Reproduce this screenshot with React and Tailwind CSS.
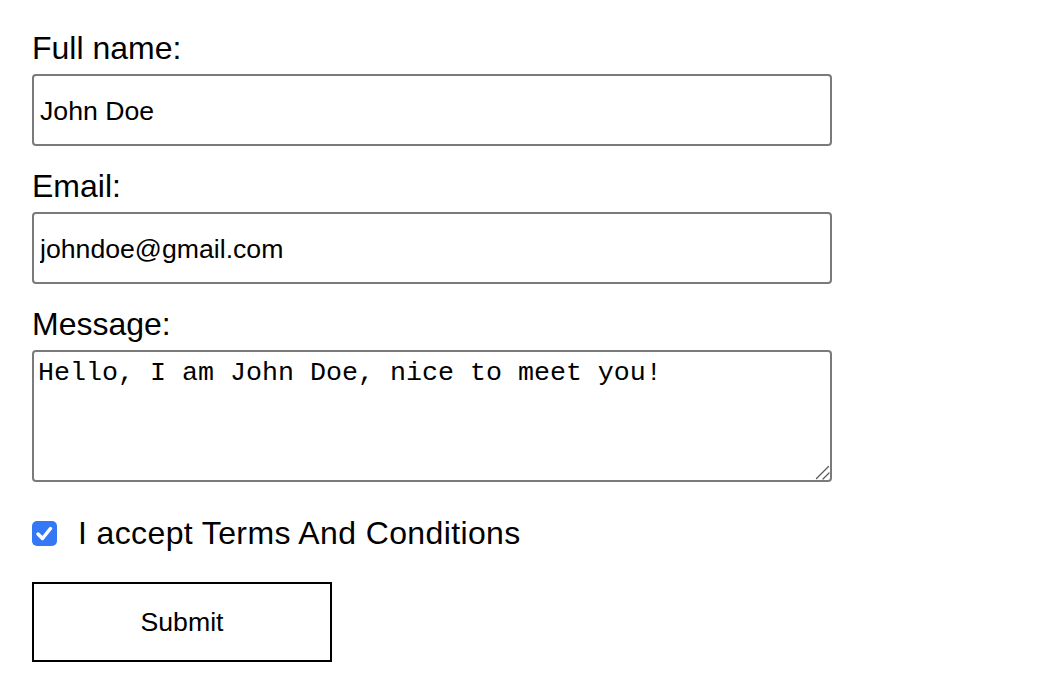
import React, { useState } from 'react';

const labelCls = "block text-[32px] leading-[36px] text-black mb-2";
const fieldCls = "block w-[800px] border-2 border-[#7a7a7a] rounded-[4px] bg-white text-black outline-none";

export default function App() {
    const [form, setForm] = useState({
        name: 'John Doe',
        email: 'johndoe@gmail.com',
        message: 'Hello, I am John Doe, nice to meet you!',
        accept: true,
    });

    const update = (key, value) => setForm(prev => ({ ...prev, [key]: value }));

    return (
        <div className="min-h-screen bg-white pl-8 pt-[30px] font-['Liberation_Sans',Arial,sans-serif]">
            <form className="flex flex-col items-start" onSubmit={(e) => e.preventDefault()}>
                <label className={labelCls}>Full name:</label>
                <input
                    type="text"
                    className={`${fieldCls} h-[72px] px-[6px] pt-[2px] text-[26.67px]`}
                    value={form.name}
                    onChange={(e) => update('name', e.target.value)}
                />

                <label className={`${labelCls} mt-[22px]`}>Email:</label>
                <input
                    type="email"
                    className={`${fieldCls} h-[72px] px-[6px] pt-[2px] text-[26.67px]`}
                    value={form.email}
                    onChange={(e) => update('email', e.target.value)}
                />

                <label className={`${labelCls} mt-[22px]`}>Message:</label>
                <div className="relative">
                    <textarea
                        className={`${fieldCls} h-[132px] px-[4px] pt-[6px] resize-none text-[26.67px] leading-[30px] font-['Liberation_Mono','Courier_New',monospace]`}
                        value={form.message}
                        onChange={(e) => update('message', e.target.value)}
                    />
                    {/* resize grip, drawn like the one in the picture */}
                    <svg className="absolute right-[2px] bottom-[2px] pointer-events-none" width="16" height="16" viewBox="0 0 16 16">
                        <path d="M2.5 14.5 L14.5 2.5 M9 15 L15 9" stroke="#5a5a5a" strokeWidth="1.3" strokeLinecap="round" />
                    </svg>
                </div>

                {/* custom checkbox so it looks like the blue rounded one */}
                <label className="mt-[33px] flex items-center h-[36px] cursor-pointer">
                    <input
                        type="checkbox"
                        className="sr-only"
                        checked={form.accept}
                        onChange={(e) => update('accept', e.target.checked)}
                    />
                    <span className={`flex items-center justify-center w-[25px] h-[25px] rounded-[5px] ${form.accept ? 'bg-[#3478f6]' : 'bg-white border border-[#767676]'}`}>
                        {form.accept && (
                            <svg width="25" height="25" viewBox="0 0 25 25">
                                <path d="M6 13 L10.5 17.5 L18.5 7.5" fill="none" stroke="white" strokeWidth="3.5" strokeLinecap="round" strokeLinejoin="round" />
                            </svg>
                        )}
                    </span>
                    <span className="ml-[21px] text-[32px] leading-[36px] tracking-[0.38px] text-black">I accept Terms And Conditions</span>
                </label>

                <button
                    type="submit"
                    className="mt-[31px] w-[300px] h-[80px] border-2 border-black bg-white text-[26.67px] text-black"
                >
                    Submit
                </button>
            </form>
        </div>
    );
}
